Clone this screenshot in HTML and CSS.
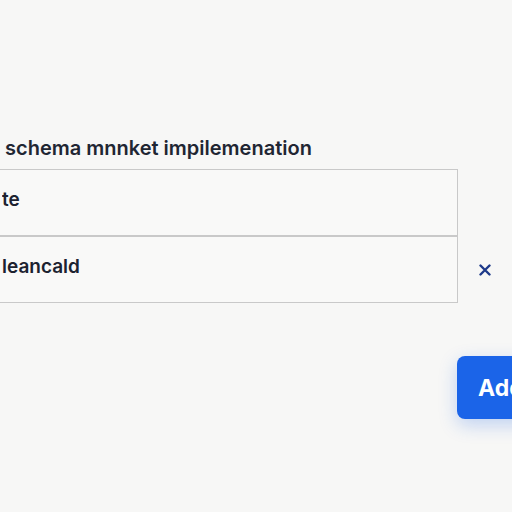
FILE: index.html
```html
<!DOCTYPE html>
<html lang="en">
<head>
  <meta charset="UTF-8">
  <title>Schema fields</title>
  <link rel="stylesheet" href="styles.css">
</head>
<body>
  <main class="form">
    <label class="field-label">schema mnnket impilemenation</label>

    <div class="rows">
      <div class="row">
        <input class="field" type="text" value="te">
        <span></span>
      </div>
      <div class="row">
        <input class="field" type="text" value="leancald">
        <button class="remove" type="button" aria-label="Remove">
          <svg width="12" height="12" viewBox="0 0 12 12">
            <path d="M1.5 1.5 L10.5 10.5 M10.5 1.5 L1.5 10.5" stroke="#1e3a8a" stroke-width="2.4" stroke-linecap="round"/>
          </svg>
        </button>
      </div>
    </div>

    <div class="actions">
      <button class="add" type="button">Add</button>
    </div>
  </main>
</body>
</html>
```

FILE: styles.css
```css
body {
  margin: 0;
  padding: 0;
  font-family: "Inter", "Roboto", "Liberation Sans", sans-serif;
  background-color: #f7f7f6;
  color: #1d2431;
  overflow: hidden;
  height: 512px;
}

.form {
  margin-left: -20px;
  padding-top: 136px;
}

.field-label {
  display: block;
  padding-left: 25px;
  font-size: 20px;
  line-height: 24px;
  font-weight: 600;
  color: #1f2633;
  margin-bottom: 9px;
}

.row {
  display: grid;
  grid-template-columns: 478px 54px;
  align-items: center;
}

.field {
  box-sizing: border-box;
  height: 67px;
  width: 100%;
  margin: 0;
  border: 1px solid #c9c9c9;
  border-radius: 0;
  background-color: #f9f9f8;
  padding: 0 0 6px 21px;
  font-family: inherit;
  font-size: 19px;
  font-weight: 600;
  color: #1c2230;
  outline: none;
}

.remove {
  display: flex;
  align-items: center;
  justify-content: center;
  background: none;
  border: none;
  padding: 0;
  height: 67px;
  cursor: pointer;
}

.actions {
  padding-left: 477px;
  padding-top: 53px;
}

.add {
  background-color: #1b64e8;
  color: #ffffff;
  border: none;
  border-radius: 8px;
  height: 63px;
  padding: 0 22px 0 21px;
  font-family: inherit;
  font-size: 23px;
  font-weight: 700;
  box-shadow: 0 6px 18px rgba(27, 100, 232, 0.25);
  cursor: pointer;
}
```
